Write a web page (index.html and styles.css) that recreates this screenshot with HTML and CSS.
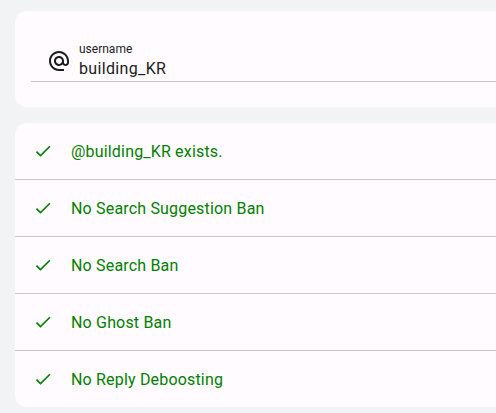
FILE: index.html
```html
<!DOCTYPE html>
<html>
<head>
<meta charset="utf-8">
<link rel="stylesheet" href="styles.css">
</head>
<body>
<div class="page">
  <section class="card input-card">
    <div class="field">
      <svg class="at" viewBox="0 0 24 24"><path d="M12 2C6.48 2 2 6.48 2 12s4.48 10 10 10h5v-2h-5c-4.34 0-8-3.66-8-8s3.66-8 8-8 8 3.66 8 8v1.43c0 .79-.71 1.570-1.5 1.57s-1.5-.78-1.5-1.57V12c0-2.76-2.24-5-5-5s-5 2.24-5 5 2.24 5 5 5c1.38 0 2.64-.56 3.54-1.47.65.89 1.77 1.47 2.96 1.47 1.97 0 3.5-1.6 3.5-3.57V12c0-5.52-4.48-10-10-10zm0 13c-1.66 0-3-1.34-3-3s1.34-3 3-3 3 1.34 3 3-1.34 3-3 3z"/></svg>
      <div class="field-text">
        <span class="label">username</span>
        <span class="value">building_KR</span>
      </div>
    </div>
  </section>
  <section class="card results">
    <div class="row"><svg class="check" viewBox="0 0 24 24"><path d="M9 16.17L4.83 12l-1.42 1.41L9 19 21 7l-1.41-1.41z"/></svg><span>@building_KR exists.</span></div>
    <div class="row"><svg class="check" viewBox="0 0 24 24"><path d="M9 16.17L4.83 12l-1.42 1.41L9 19 21 7l-1.41-1.41z"/></svg><span>No Search Suggestion Ban</span></div>
    <div class="row"><svg class="check" viewBox="0 0 24 24"><path d="M9 16.17L4.83 12l-1.42 1.41L9 19 21 7l-1.41-1.41z"/></svg><span>No Search Ban</span></div>
    <div class="row"><svg class="check" viewBox="0 0 24 24"><path d="M9 16.17L4.83 12l-1.42 1.41L9 19 21 7l-1.41-1.41z"/></svg><span>No Ghost Ban</span></div>
    <div class="row"><svg class="check" viewBox="0 0 24 24"><path d="M9 16.17L4.83 12l-1.42 1.41L9 19 21 7l-1.41-1.41z"/></svg><span>No Reply Deboosting</span></div>
  </section>
</div>
</body>
</html>
```
FILE: styles.css
```css
html, body {
  margin: 0;
  padding: 0;
  background: #f2f3f4;
  font-family: Roboto, "Noto Sans", sans-serif;
}
.page {
  padding: 11px 0 0 15px;
  display: flex;
  flex-direction: column;
  gap: 16px;
}
.card {
  background: #fffbfe;
  border-radius: 12px 0 0 12px;
  margin-right: -20px;
}
.input-card {
  height: 96px;
  padding: 0 0 0 16px;
  box-sizing: border-box;
}
.field {
  display: flex;
  align-items: flex-start;
  height: 71px;
  border-bottom: 1px solid #c9c7cc;
  padding: 31px 0 2px 16px;
  box-sizing: border-box;
}
.at {
  width: 24px;
  height: 24px;
  fill: #1c1b1f;
  margin-top: 7px;
  margin-right: 8px;
  flex: none;
}
.field-text {
  display: flex;
  flex-direction: column;
}
.label {
  font-size: 12px;
  color: #1c1b1f;
  line-height: 14px;
}
.value {
  font-size: 16px;
  letter-spacing: 0.35px;
  color: #1c1b1f;
  line-height: 22px;
  margin-top: 2px;
}
.results {
  display: flex;
  flex-direction: column;
}
.row {
  height: 57px;
  box-sizing: border-box;
  display: flex;
  align-items: center;
  padding-left: 18px;
  color: #008000;
  font-size: 16px;
  letter-spacing: 0.18px;
  border-bottom: 1px solid #c9c7cc;
}
.row:last-child {
  border-bottom: none;
  height: 56px;
}
.check {
  width: 20px;
  height: 20px;
  fill: #008000;
  margin-right: 18px;
  flex: none;
}
```
